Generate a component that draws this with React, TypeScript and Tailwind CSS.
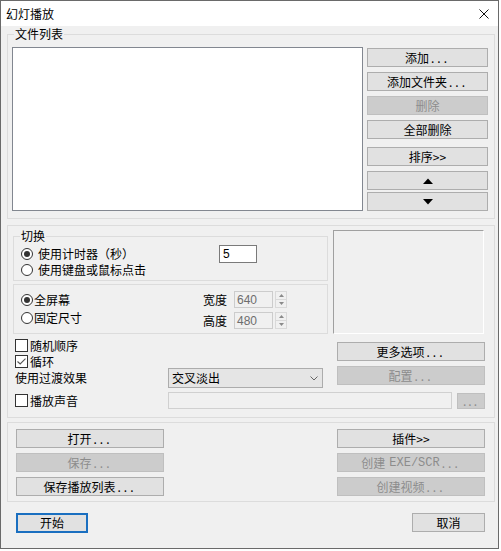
import React from "react";

function Btn({
  children,
  disabled = false,
  h = "h-[19px]",
  className = "",
}: {
  children?: React.ReactNode;
  disabled?: boolean;
  h?: string;
  className?: string;
}) {
  return (
    <div
      className={`${h} flex items-center justify-center border whitespace-nowrap ${
        disabled ? "bg-[#cccccc] border-[#bfbfbf] text-[#8c8c8c]" : "bg-[#e1e1e1] border-[#adadad] text-black"
      } ${className}`}
    >
      {children}
    </div>
  );
}

// spaced-out ellipsis like the dialog font draws it
function Dots() {
  return <span className="ml-[2px] tracking-[3px]">...</span>;
}

function Radio({ checked = false, className = "" }: { checked?: boolean; className?: string }) {
  return (
    <div className={`w-[12px] h-[12px] shrink-0 rounded-full border border-[#333333] bg-white flex items-center justify-center ${className}`}>
      {checked && <div className="w-[6px] h-[6px] rounded-full bg-[#333333]" />}
    </div>
  );
}

function Check({ checked = false }: { checked?: boolean }) {
  return (
    <div className="w-[13px] h-[13px] shrink-0 border border-[#333333] bg-white flex items-center justify-center">
      {checked && (
        <svg width="9" height="7" viewBox="0 0 9 7">
          <path d="M0.5 3.5L3.2 6L8.5 0.7" stroke="#555555" strokeWidth="1.1" fill="none" />
        </svg>
      )}
    </div>
  );
}

function Legend({ children }: { children: React.ReactNode }) {
  return <div className="-mt-[8px] ml-[6px] px-[1px] h-[14px] w-fit bg-[#f0f0f0]">{children}</div>;
}

function NumBox({ value, className = "" }: { value: string; className?: string }) {
  return (
    <div
      className={`w-[39px] h-[17px] border border-[#cccccc] bg-[#f0f0f0] pl-[2px] flex items-center text-[#6d6d6d] font-['Liberation_Sans',sans-serif] ${className}`}
    >
      {value}
    </div>
  );
}

function Spin() {
  return (
    <div className="ml-[2px] w-[12px] h-[17px] flex flex-col border border-[#d9d9d9] bg-[#f0f0f0]">
      <div className="flex-1 flex items-center justify-center border-b border-[#d9d9d9]">
        <svg width="5" height="3" viewBox="0 0 5 3">
          <path d="M0 3L2.5 0L5 3Z" fill="#8a8a8a" />
        </svg>
      </div>
      <div className="flex-1 flex items-center justify-center">
        <svg width="5" height="3" viewBox="0 0 5 3">
          <path d="M0 0L2.5 3L5 0Z" fill="#8a8a8a" />
        </svg>
      </div>
    </div>
  );
}

export default function App() {
  return (
    <div className="w-[501px] h-[551px] bg-white">
      <div className="w-[499px] h-[549px] border border-[#6a6a6a] bg-[#f0f0f0] flex flex-col text-[12px] leading-[14px] text-black font-['Noto_Sans_CJK_SC',sans-serif]">
        {/* title bar */}
        <div className="h-[25px] shrink-0 bg-white flex items-center justify-between pl-[5px] pr-[9px]">
          <span>幻灯播放</span>
          <svg width="10" height="10" viewBox="0 0 10 10">
            <path d="M0.5 0.5L9.5 9.5M9.5 0.5L0.5 9.5" stroke="#111111" strokeWidth="1" />
          </svg>
        </div>

        <div className="flex-1 flex flex-col pl-[6px]">
          {/* file list */}
          <div className="mt-[8px] w-[488px] h-[185px] shrink-0 border border-[#dcdcdc] flex flex-col">
            <Legend>文件列表</Legend>
            <div className="mt-[6px] ml-[4px] flex items-start">
              <div className="w-[351px] h-[164px] bg-white border border-[#828790]" />
              <div className="ml-[4px] mt-[1px] w-[121px] flex flex-col">
                <Btn>
                  添加<Dots />
                </Btn>
                <Btn className="mt-[5px]">
                  添加文件夹<Dots />
                </Btn>
                <Btn disabled className="mt-[5px]">删除</Btn>
                <Btn className="mt-[5px]">全部删除</Btn>
                <Btn className="mt-[8px]">排序&gt;&gt;</Btn>
                <Btn className="mt-[5px]">
                  <svg width="10" height="6" viewBox="0 0 10 6">
                    <path d="M0 6L5 0.5L10 6Z" fill="#000000" />
                  </svg>
                </Btn>
                <Btn className="mt-[2px]">
                  <svg width="10" height="6" viewBox="0 0 10 6">
                    <path d="M0 0L5 5.5L10 0Z" fill="#000000" />
                  </svg>
                </Btn>
              </div>
            </div>
          </div>

          {/* options */}
          <div className="mt-[6px] w-[488px] h-[193px] shrink-0 border border-[#dcdcdc] flex flex-col">
            <div className="flex items-start">
              <div className="ml-[5px] w-[315px] flex flex-col">
                <div className="mt-[10px] h-[45px] border border-[#dcdcdc] flex flex-col">
                  <Legend>切换</Legend>
                  <div className="mt-[2px] h-[18px] flex items-center">
                    <Radio checked className="ml-[7px]" />
                    <span className="ml-[5px] w-[181px]">使用计时器（秒）</span>
                    <div className="w-[38px] h-[18px] bg-white border border-[#7a7a7a] pl-[3px] flex items-center font-['Liberation_Sans',sans-serif]">
                      5
                    </div>
                  </div>
                  <div className="h-[14px] flex items-center">
                    <Radio className="ml-[7px]" />
                    <span className="ml-[5px]">使用键盘或鼠标点击</span>
                  </div>
                </div>
                <div className="mt-[3px] h-[50px] border border-[#dcdcdc] flex flex-col">
                  <div className="mt-[6px] h-[17px] flex items-center">
                    <Radio checked className="ml-[7px]" />
                    <span className="ml-[1px] w-[169px]">全屏幕</span>
                    <span>宽度</span>
                    <NumBox value="640" className="ml-[7px]" />
                    <Spin />
                  </div>
                  <div className="mt-[4px] h-[17px] flex items-center">
                    <div className="w-[189px] mb-[6px] flex items-center">
                      <Radio className="ml-[7px]" />
                      <span className="ml-[1px]">固定尺寸</span>
                    </div>
                    <span>高度</span>
                    <NumBox value="480" className="ml-[7px]" />
                    <Spin />
                  </div>
                </div>
              </div>
              <div className="ml-[5px] mt-[4px] w-[151px] h-[104px] border border-t-[#a0a0a0] border-l-[#a0a0a0] border-r-white border-b-white" />
            </div>

            <div className="flex items-start">
              <div className="ml-[7px] w-[308px] flex flex-col">
                <div className="mt-[5px] h-[13px] flex items-center">
                  <Check />
                  <span className="ml-[2px]">随机顺序</span>
                </div>
                <div className="mt-[3px] h-[13px] flex items-center">
                  <Check checked />
                  <span className="ml-[2px]">循环</span>
                </div>
                <div className="h-[20px] flex items-center">
                  <span className="w-[153px]">使用过渡效果</span>
                  <div className="w-[155px] h-[20px] border border-[#acacac] bg-[#e5e5e5] flex items-center justify-between pl-[3px] pr-[4px]">
                    <span>交叉淡出</span>
                    <svg width="8" height="5" viewBox="0 0 8 5">
                      <path d="M0.5 0.5L4 4L7.5 0.5" stroke="#666666" fill="none" />
                    </svg>
                  </div>
                </div>
              </div>
              <div className="ml-[14px] w-[148px] flex flex-col">
                <Btn className="mt-[8px]">
                  更多选项<Dots />
                </Btn>
                <Btn disabled className="mt-[5px]">
                  配置<Dots />
                </Btn>
              </div>
            </div>

            <div className="mt-[4px] ml-[7px] h-[17px] flex items-center">
              <div className="w-[153px] flex items-center">
                <Check />
                <span className="ml-[2px]">播放声音</span>
              </div>
              <div className="w-[284px] h-[17px] border border-[#d0d0d0] bg-[#f0f0f0]" />
              <Btn disabled h="h-[16px]" className="ml-[5px] w-[28px]">
                <span className="tracking-[2px]">...</span>
              </Btn>
            </div>
          </div>

          {/* file actions */}
          <div className="mt-[4px] w-[488px] h-[80px] shrink-0 border border-[#dcdcdc] flex justify-between pl-[8px] pr-[9px] pt-[6px]">
            <div className="w-[148px] flex flex-col">
              <Btn>
                打开<Dots />
              </Btn>
              <Btn disabled className="mt-[5px]">
                保存<Dots />
              </Btn>
              <Btn className="mt-[5px]">
                保存播放列表<Dots />
              </Btn>
            </div>
            <div className="w-[148px] flex flex-col">
              <Btn>插件&gt;&gt;</Btn>
              <Btn disabled className="mt-[5px]">
                创建 <span className="ml-[4px] font-['Liberation_Mono',monospace]">EXE/SCR</span>
                <Dots />
              </Btn>
              <Btn disabled className="mt-[5px]">
                创建视频<Dots />
              </Btn>
            </div>
          </div>

          <div className="mt-[11px] w-[488px] flex justify-between pl-[9px] pr-[10px]">
            <div className="w-[72px] h-[20px] border-2 border-[#1a6fc0] bg-[#e1e1e1] flex items-center justify-center">
              开始
            </div>
            <Btn className="w-[73px]">取消</Btn>
          </div>
        </div>
      </div>
    </div>
  );
}
